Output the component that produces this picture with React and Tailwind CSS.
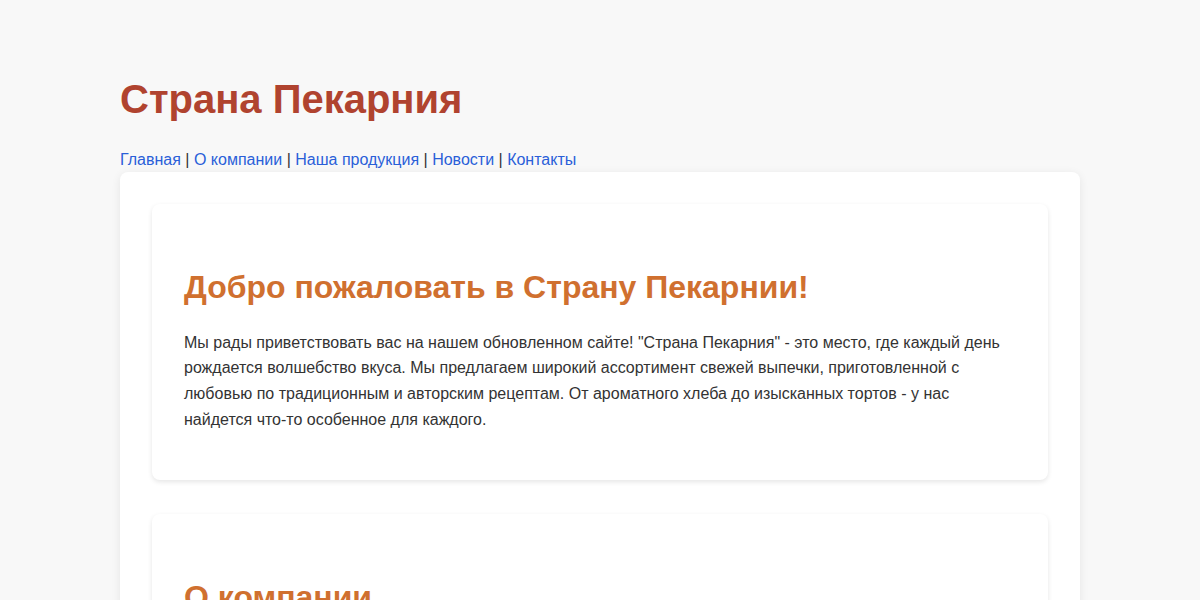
import React from 'react';

const links = ['Главная', 'О компании', 'Наша продукция', 'Новости', 'Контакты'];

function Section({ title, children }) {
  return (
    <section className="bg-white rounded-lg shadow-[0_2px_5px_rgba(0,0,0,0.1)] px-8 pt-[65px] pb-8 mb-[34px]">
      <h2 className="text-[32px] leading-[1.15] font-bold text-[#d0702f] mb-6">{title}</h2>
      {children}
    </section>
  );
}

export default function App() {
  return (
    <div className="min-h-screen bg-[#f8f8f8] text-[#333] font-['Liberation_Sans',Arial,sans-serif]">
      <div className="w-[960px] mx-auto pt-[76px]">
        <header>
          <h1 className="text-[40px] leading-[46px] font-bold text-[#b0432f] mb-[25px]">Страна Пекарния</h1>
          <nav className="text-base leading-[25px] text-[#333]">
            {links.map((l, i) => (
              <React.Fragment key={l}>
                {i > 0 && ' | '}
                <a href="#" className="text-[#2a5fd8]">{l}</a>
              </React.Fragment>
            ))}
          </nav>
        </header>
        <main className="bg-white rounded-lg shadow-[0_2px_10px_rgba(0,0,0,0.08)] p-8">
          <Section title="Добро пожаловать в Страну Пекарнии!">
            <p className="text-base leading-[1.6] mb-4">
              Мы рады приветствовать вас на нашем обновленном сайте! "Страна Пекарния" - это место, где каждый день
              рождается волшебство вкуса. Мы предлагаем широкий ассортимент свежей выпечки, приготовленной с
              любовью по традиционным и авторским рецептам. От ароматного хлеба до изысканных тортов - у нас
              найдется что-то особенное для каждого.
            </p>
          </Section>
          <Section title="О компании">
            <p className="text-base leading-[1.6] mb-4">
              "Страна Пекарния" - это семейная пекарня с многолетней историей.
            </p>
          </Section>
        </main>
      </div>
    </div>
  );
}
